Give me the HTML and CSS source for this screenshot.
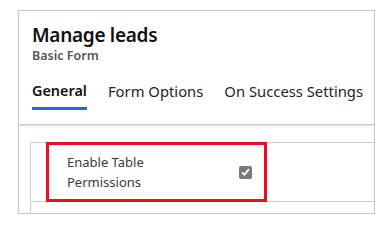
FILE: index.html
```html
<!DOCTYPE html>
<html lang="en">

<head>
    <meta name="viewport" content="width=device-width, initial-scale=1.0">
    <link rel="stylesheet" href="styles.css">
</head>

<body>
    <div class="panel">
        <div class="header">
            <h1>Manage leads</h1>
            <div class="subtitle">Basic Form</div>
            <div class="tabs">
                <span class="tab active">General</span>
                <span class="tab">Form Options</span>
                <span class="tab">On Success Settings</span>
            </div>
        </div>

        <div class="content">
            <div class="section">
                <div class="field-row">
                    <!-- highlighted field -->
                    <div class="field highlight">
                        <label>Enable Table<br>Permissions</label>
                        <span class="checkbox">
                            <svg width="9" height="8" viewBox="0 0 9 8">
                                <path d="M1 4.3 L3.4 6.6 L8 1.2" fill="none" stroke="#fff" stroke-width="1.8" />
                            </svg>
                        </span>
                    </div>
                </div>
            </div>
        </div>
    </div>
</body>

</html>
```

FILE: styles.css
```css
body {
    margin: 0;
    background: #fff;
    font-family: "Noto Sans", "Open Sans", sans-serif;
    color: #323130;
}

.panel {
    box-sizing: border-box;
    width: 357px;
    height: 204px;
    margin: 10px 0 0 18px;
    border: 1px solid #c8c8c8;
    overflow: hidden;
    display: flex;
    flex-direction: column;
}

.header {
    height: 114px;
    box-sizing: border-box;
    padding: 11px 0 0 13px;
    border-bottom: 1px solid #c6c6c6;
    box-shadow: 0 1px 2px rgba(0, 0, 0, 0.12);
}

h1 {
    margin: 0;
    font-size: 19px;
    line-height: 26px;
    font-weight: 600;
    letter-spacing: -0.3px;
    color: #111;
}

.subtitle {
    font-size: 12.5px;
    line-height: 16px;
    font-weight: 600;
    color: #555;
}

.tabs {
    display: flex;
    gap: 21px;
    margin-top: 17px;
}

.tab {
    font-size: 14.8px;
    line-height: 20px;
    padding-bottom: 9px;
    color: #252423;
}

.tab.active {
    font-weight: 600;
    font-size: 14.4px;
    color: #111;
    border-bottom: 3px solid #2266e3;
    padding-bottom: 6px;
}

.content {
    flex: 1;
    padding: 17px 0 0 11px;
}

.section {
    height: 100%;
    border-left: 1px solid #d0d0d0;
    border-top: 1px solid #d0d0d0;
}

.field-row {
    border-bottom: 1px solid #d0d0d0;
}

.field {
    display: flex;
    align-items: center;
    box-sizing: border-box;
    width: 221px;
    height: 60px;
    margin: -1px 0 -1px 15px;
    padding: 0 0 0 18px;
}

.highlight {
    border: 3px solid #e81123;
}

.field label {
    width: 172px;
    font-size: 13px;
    line-height: 20px;
    color: #3b3a39;
}

.checkbox {
    width: 13px;
    height: 13px;
    border-radius: 2px;
    background: #7a7a7a;
    display: flex;
    align-items: center;
    justify-content: center;
}
```
